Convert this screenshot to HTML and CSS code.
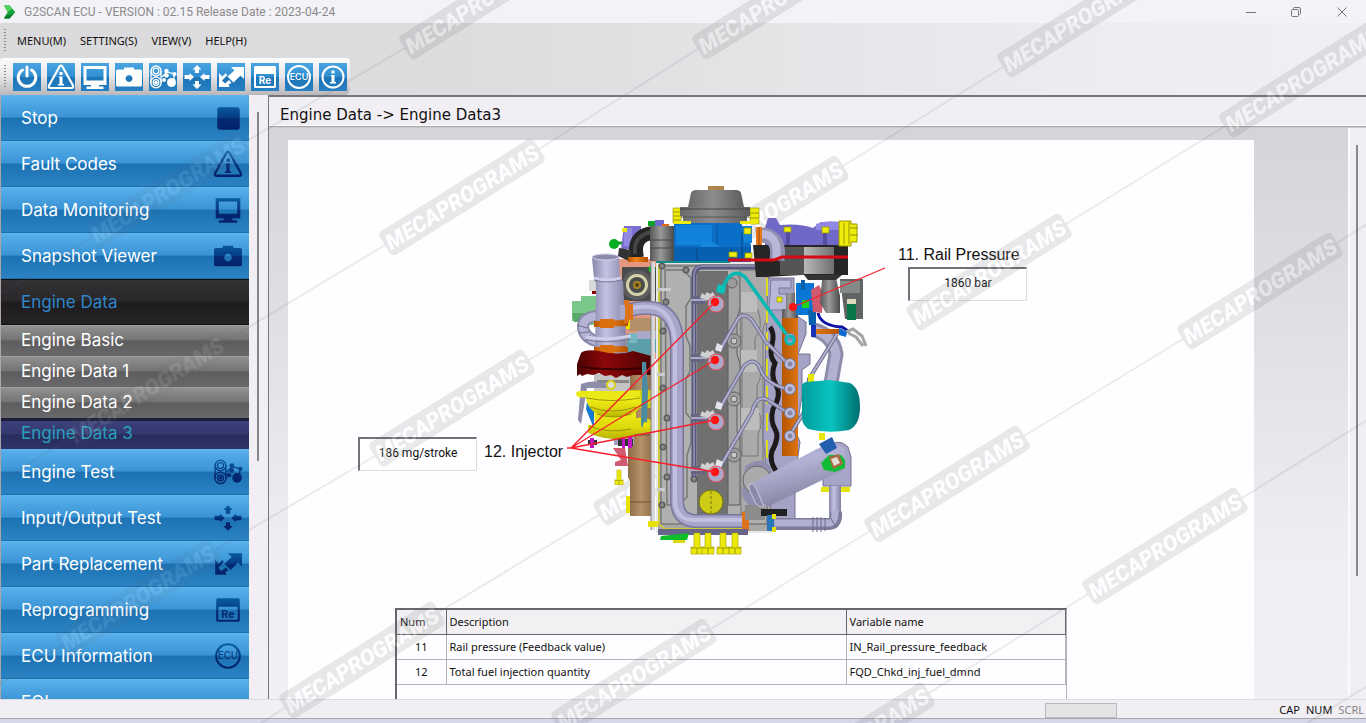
FILE: index.html
```html
<!DOCTYPE html>
<html lang="en">
<head>
<meta charset="utf-8">
<title>G2SCAN ECU</title>
<link rel="stylesheet" href="styles.css">
</head>
<body>
<svg class="defs" width="0" height="0" aria-hidden="true">
  <defs>
    <linearGradient id="navy" gradientUnits="userSpaceOnUse" x1="0" y1="0" x2="0" y2="28">
      <stop offset="0" stop-color="#0a64a6"/><stop offset=".5" stop-color="#063b84"/><stop offset=".52" stop-color="#042a72"/><stop offset="1" stop-color="#032069"/>
    </linearGradient>
    <symbol id="i-power" viewBox="0 0 28 28"><path fill="none" stroke-width="3" stroke-linecap="round" d="M14 4v9M9.500 7a8.800 8.800 0 1 0 9 0"/></symbol>
    <symbol id="i-stop" viewBox="0 0 28 28"><rect stroke="none" x="4" y="4" width="21" height="21" rx="2.500"/></symbol>
    <symbol id="i-warn" viewBox="0 0 28 28"><path fill="none" stroke-width="2.200" stroke-linejoin="round" d="M12.600 3.500Q14 1.500 15.400 3.500L26 22.500Q26.800 25 24.500 25H3.500Q1.200 25 2 22.500Z"/><path stroke="none" d="M12.500 9h3v3h-3zM12 13.500h3.500V21H17v1.500h-6V21h1.500v-6H12z"/></symbol>
    <symbol id="i-monitor" viewBox="0 0 28 28"><path stroke="none" fill-rule="evenodd" d="M2.500 3h23v19h-23zM5.500 6v11.500h17V6zM10 22h8v1.500h4.500V26h-17v-2.500H10z"/></symbol>
    <symbol id="i-camera" viewBox="0 0 28 28"><path stroke="none" fill-rule="evenodd" d="M1 8q0-1.500 1.500-1.500H9V4.500h10v2h6.500Q27 6.500 27 8v14q0 1.500-1.500 1.500h-23Q1 23.500 1 22zM14 12a3.500 3.500 0 1 0 .1 0z"/></symbol>
    <symbol id="i-test" viewBox="0 0 28 28"><g fill="none" stroke-width="1.300"><circle cx="7" cy="8" r="5"/><circle cx="7" cy="8" r="2.800"/><circle cx="7" cy="19.500" r="5.300"/><circle cx="7" cy="19.500" r="2.800"/><path d="M2 8v12M12 8v12M13 14l5-5 7 2v8l-4 2"/></g><g stroke="none"><circle cx="7" cy="19.500" r="1.700"/><circle cx="17.500" cy="8" r="2.200"/><circle cx="17.500" cy="12.500" r="2.200"/><circle cx="22.500" cy="19.500" r="4.500"/><circle cx="25.500" cy="11" r="2"/><circle cx="15" cy="17" r="2"/></g></symbol>
    <symbol id="i-arrows" viewBox="0 0 28 28"><path stroke="none" d="M14 2l4.500 4.500H16V10h-4V6.500H9.500zM14 26l-4.500-4.500H12V18h4v3.500h2.500zM11 14l-4.500 4V16H1.500v-4h5v-2zM17 14l4.500-4v2h5v4h-5v2z"/></symbol>
    <symbol id="i-replace" viewBox="0 0 28 28"><path stroke="none" d="M14 4h13v12l-3.500-3.500-7 7-6-6 7-6zM2 24V10l3.200 3.500L9 10l1 2.500-5 5 3 3L12 17l2.500 3-3 1.500 1 2.500z"/></symbol>
    <symbol id="i-re" viewBox="0 0 28 28"><path stroke="none" fill-rule="evenodd" d="M4.500 3h19Q25 3 25 4.500v19q0 1.500-1.500 1.500h-19Q3 25 3 23.500v-19Q3 3 4.500 3zM5 11v12h18V11z"/><text class="icon-re" x="14" y="21" text-anchor="middle">Re</text></symbol>
    <symbol id="i-ecu" viewBox="0 0 28 28"><circle cx="14" cy="14" r="11" fill="none" stroke-width="2"/><text class="icon-ecu" x="14" y="17" text-anchor="middle">ECU</text></symbol>
    <symbol id="i-info" viewBox="0 0 28 28"><circle cx="14" cy="14" r="10.500" fill="none" stroke-width="2"/><path stroke="none" d="M12.500 7.500h3v3h-3zM12 12h3.500v7H17v1.500h-6V19h1.500v-5.500H12z"/></symbol>
    <linearGradient id="pipeH" x1="0" x2="1"><stop offset="0" stop-color="#8886a8"/><stop offset=".4" stop-color="#c4c3e4"/><stop offset="1" stop-color="#8381a2"/></linearGradient>
    <linearGradient id="metal" x1="0" x2="1"><stop offset="0" stop-color="#575757"/><stop offset=".45" stop-color="#9a9a9a"/><stop offset="1" stop-color="#4a4a4a"/></linearGradient>
    <linearGradient id="pulley" x1="0" x2="1"><stop offset="0" stop-color="#6a6a6a"/><stop offset=".45" stop-color="#8c8c8c"/><stop offset="1" stop-color="#5c5c5c"/></linearGradient>
    <linearGradient id="side" x1="0" x2="1"><stop offset="0" stop-color="#b9b9b9"/><stop offset="1" stop-color="#6f6f6f"/></linearGradient>
    <linearGradient id="yel" x1="0" y1="0" x2="0" y2="1"><stop offset="0" stop-color="#f2f01c"/><stop offset=".6" stop-color="#dcd80a"/><stop offset="1" stop-color="#b5b105"/></linearGradient>
    <linearGradient id="red" x1="0" x2="1"><stop offset="0" stop-color="#4c0203"/><stop offset=".35" stop-color="#8c0709"/><stop offset="1" stop-color="#480203"/></linearGradient>
    <linearGradient id="teal" x1="0" x2="1"><stop offset="0" stop-color="#009c9a"/><stop offset=".5" stop-color="#09c4c0"/><stop offset="1" stop-color="#006e70"/></linearGradient>
    <linearGradient id="orange" x1="0" x2="1"><stop offset="0" stop-color="#b65600"/><stop offset=".4" stop-color="#f0831c"/><stop offset="1" stop-color="#b05000"/></linearGradient>
    <linearGradient id="tan" x1="0" x2="1"><stop offset="0" stop-color="#8b6b47"/><stop offset=".5" stop-color="#b79268"/><stop offset="1" stop-color="#896945"/></linearGradient>
    <linearGradient id="big" x1="0" y1="0" x2=".4" y2="1"><stop offset="0" stop-color="#9b99ba"/><stop offset=".4" stop-color="#b4b3d5"/><stop offset="1" stop-color="#83819f"/></linearGradient>
    <g id="bolt"><path fill="#ece90c" stroke="#a39f00" stroke-width=".6" d="M-3 0H3V14H6V21H-6V14H-3z"/><path stroke="#a39f00" d="M-6 15H6M0 15v6"/></g>
    <g id="inj"><path d="M-24-6v8h14v-8z" fill="#66657f"/><path d="M-24-2H-8" stroke="#aaa9c9" stroke-width="2"/><path d="M-15-4l2-5 3 2 2-3 3 2 3-2 2 4-3 5z" fill="#d0d0d0"/><circle r="8" cx="1" cy="2" fill="#aaa9c9" stroke="#e65b66"/><circle r="4.200" fill="#f11"/></g>
    <g id="nut"><circle r="3.500" fill="#5c5c5c"/><circle r="2" fill="#888"/></g>
    <g id="joint"><circle r="6" fill="#77768f"/><circle r="5" fill="#bdbcdc"/><circle r="2.500" fill="#8887a5"/></g>
    <mask id="cut" maskUnits="userSpaceOnUse" x="-95" y="-18" width="190" height="36"><rect x="-95" y="-18" width="190" height="36" fill="#fff"/><text class="mark-cut" y="8" text-anchor="middle">MECAPROGRAMS</text></mask>
    <g id="tag"><rect x="-91" y="-14" width="182" height="28" rx="5" fill="#60606c" fill-opacity=".14" mask="url(#cut)"/><text class="mark-text" y="8" text-anchor="middle">MECAPROGRAMS</text></g>
  </defs>
</svg>

<div class="app">
  <header class="titlebar">
    <svg class="logo" viewBox="0 0 14 16" aria-hidden="true"><path fill="#12a63b" d="M0 1h6l6 7-6 7H0l4-7z"/><path fill="#4fd05f" d="M6 1l3 3.500-5 3.500-4-7z"/><path fill="#067a2a" d="M12 8l-6 7H0l2-3.500 6-.5z"/></svg>
    <h1>G2SCAN ECU - VERSION : 02.15 Release Date : 2023-04-24</h1>
    <div class="window-buttons">
      <button aria-label="Minimize"><svg viewBox="0 0 12 12"><path d="M1 6.500h10"/></svg></button>
      <button aria-label="Restore"><svg viewBox="0 0 12 12"><path d="M3.500 3V2.500q0-1 1-1H9q1.500 0 1.500 1.500v4.500q0 1-1 1M2.500 3.500h5q1 0 1 1v5q0 1-1 1h-5q-1 0-1-1v-5q0-1 1-1z"/></svg></button>
      <button aria-label="Close"><svg viewBox="0 0 12 12"><path d="M1.500 1.500l9 9M10.500 1.500l-9 9"/></svg></button>
    </div>
  </header>

  <div class="chrome">
    <nav class="menubar">
      <span class="grip"></span>
      <button>MENU(M)</button><button>SETTING(S)</button><button>VIEW(V)</button><button>HELP(H)</button>
    </nav>
    <div class="toolbar">
      <span class="grip"></span>
      <button aria-label="Exit"><svg><use href="#i-power"/></svg></button>
      <button aria-label="Fault Codes"><svg><use href="#i-warn"/></svg></button>
      <button aria-label="Data Monitoring"><svg><use href="#i-monitor"/></svg></button>
      <button aria-label="Snapshot"><svg><use href="#i-camera"/></svg></button>
      <button aria-label="Engine Test"><svg><use href="#i-test"/></svg></button>
      <button aria-label="Input/Output Test"><svg><use href="#i-arrows"/></svg></button>
      <button aria-label="Part Replacement"><svg><use href="#i-replace"/></svg></button>
      <button aria-label="Reprogramming"><svg><use href="#i-re"/></svg></button>
      <button aria-label="ECU Information"><svg><use href="#i-ecu"/></svg></button>
      <button aria-label="About"><svg><use href="#i-info"/></svg></button>
    </div>
  </div>

  <div class="body">
    <aside class="sidebar">
      <nav class="nav">
        <button class="item">Stop<svg><use href="#i-stop"/></svg></button>
        <button class="item">Fault Codes<svg><use href="#i-warn"/></svg></button>
        <button class="item">Data Monitoring<svg><use href="#i-monitor"/></svg></button>
        <button class="item">Snapshot Viewer<svg><use href="#i-camera"/></svg></button>
        <button class="item open">Engine Data</button>
        <button class="sub">Engine Basic</button>
        <button class="sub">Engine Data 1</button>
        <button class="sub">Engine Data 2</button>
        <button class="sub current">Engine Data 3</button>
        <button class="item">Engine Test<svg><use href="#i-test"/></svg></button>
        <button class="item">Input/Output Test<svg><use href="#i-arrows"/></svg></button>
        <button class="item">Part Replacement<svg><use href="#i-replace"/></svg></button>
        <button class="item">Reprogramming<svg><use href="#i-re"/></svg></button>
        <button class="item">ECU Information<svg><use href="#i-ecu"/></svg></button>
        <button class="item">EOL</button>
      </nav>
      <div class="track"><div class="thumb"></div></div>
    </aside>

    <main class="content">
      <h2 class="crumb">Engine Data -&gt; Engine Data3</h2>
      <div class="view">
        <div class="desk">
          <div class="paper">
            <div class="figure">
              <svg class="engine" viewBox="288 140 966 468" role="img" aria-label="Engine, top view">
                <!-- left housings and turbo -->
                <path fill="#7cc88a" d="M572 301h9v-5h18v29h-12v-4h-15z"/><path fill="#5aa96b" d="M572 313h27v9h-25z"/>
                <path fill="none" stroke="#8a89a9" stroke-width="12" d="M600 316q-16 0-17 10 0 12 16 16"/><path fill="none" stroke="#b5b4d5" stroke-width="8" d="M600 316q-16 0-17 10 0 12 16 16"/><path d="M577 325l10 3M579 333l10-1M585 341l6-6" stroke="#6f6e8a"/>
                <path fill="#d9d9d9" d="M589 280h8v11h-8z"/><path fill="#800" d="M592 291h6v3h-6z"/>
                <path fill="#e5987f" d="M617 259h44v100h-44z"/>
                <path fill="url(#tan)" d="M630 387h24v129h-24v-35l-2-4v-80z"/><path d="M630 435h22M630 502h22" stroke="#6e5234"/>
                <path fill="#4a4a4a" d="M622 267h34v34h-34z"/><circle cx="637" cy="285" r="15" fill="#5d5d5d"/><circle cx="637" cy="285" r="11" fill="#d5d3aa"/><circle cx="637" cy="285" r="8" fill="#4c4c4c"/><circle cx="637" cy="285" r="4" fill="#a68423"/><circle cx="637" cy="285" r="2" fill="#53421a"/>
                <circle cx="652" cy="269" r="3.500" fill="#0bbf1d"/>
                <path fill="#b49068" d="M629 318h27v13h-27z"/><path fill="#e8e406" d="M626 319h4v10h-4z"/>
                <path fill="#5b9fab" d="M627 334h29v18q-4 6-14 6t-15-6z"/><path fill="#a9a8c9" d="M637 331h20v8h-20z"/><path fill="#77b7c2" d="M629 333h8v10h-8z"/>
                <path fill="url(#pipeH)" d="M592 258l27-3 1 22 3 5 4 72q-16 5-32 0l1-70-2-6z"/><ellipse cx="605.500" cy="257" rx="13.500" ry="3" fill="#8c8ba9" stroke="#d1d0ed"/>
                <path d="M594 278q14 4 27 0M586 337q20 4 45-1" fill="none" stroke="#cfceea" stroke-width="3"/><path d="M594 280q14 4 27 0M586 340q20 4 45-1" fill="none" stroke="#7a7898"/>
                <path fill="url(#orange)" d="M594 321l31-1 3 2v4l-34 1zM594 347l31-1 3 2v4l-34 1z"/><path d="M600 319h14v9h-14zM600 345h14v9h-14z" fill="#d96f0e"/>
                <path fill="url(#tan)" d="M628 365h26v22h-26z"/>
                <path fill="#c4c4c4" d="M594 374h36v19h-36z"/><path fill="#888" d="M597 380h32v3h-32z"/>
                <path fill="url(#red)" d="M581 353q4-4 18-2 20 5 34 0l22 6v18h-22l-6 2-5-2-6 3-5-3-6 1-6-3-6 2-6-1-5 2-2-2-3 2v-12z"/><path d="M578 366q30 6 76 1" stroke="#390102" stroke-width="2" fill="none"/>
                <path fill="#1679d0" d="M587 402l7 3v24l-8-20z"/><path fill="#8d8ca9" d="M581 384q12-5 26 0v4h-20l-6 36-3-4z"/>
                <path fill="#a09fbf" d="M614 430h20v15h-20z"/>
                <path fill="#d2ce0c" d="M630 390h22v18h-22z"/>
                <path fill="url(#yel)" d="M594 410h42v8q12-2 16 4v10l-17 2-4 4q-20 4-43-5v-8h7z"/>
                <path fill="url(#yel)" d="M586 397h54q4 8-4 15-20 10-42 0-8-7-8-15z"/>
                <path fill="#ebe817" d="M576 393q2-3 10-2h54v5q-26 5-54 1-10 2-10-4z"/>
                <path d="M586 398q26 5 54 0M590 407q22 8 46 0M597 414q16 6 34 0M589 426q20 8 42 3" stroke="#99940a" fill="none"/>
                <circle cx="611" cy="385" r="5" fill="#d7d419"/><circle cx="611" cy="385" r="3" fill="#ddd"/>
                <path fill="#4b8ca0" d="M642 362h4l2 28-1 35q-5 4-6 0l1-35z"/><circle cx="646" cy="425" r="3" fill="#e8e406"/>
                <path fill="#333" d="M588 440h9v5h-9zM618 439h15v7h-15z"/><path fill="#c018c0" d="M590 438h4v10h-4zM622 437h3v13h-3zM628 437h4v11h-4z"/>
                <path fill="#d05a70" d="M613 448h12l3 18h-13v-4l6-2z"/><use href="#bolt" transform="translate(619 470) scale(.7)"/>
                <path fill="#e8e406" d="M626 496h4v17h-4z"/>
                <!-- cylinder block -->
                <path fill="#aaa8a5" stroke="#e8e8e8" stroke-width="2" d="M657 263h114v269h-114z"/>
                <path fill="#b0b0b0" stroke="#606060" d="M661 266h106v258h-106z"/>
                <path d="M659 264v260l6 5h80" fill="none" stroke="#d5d21a" stroke-width="1.500"/><path d="M653 262v268" stroke="#d8d8dc" stroke-width="4"/><path d="M651 262v268" stroke="#858585"/>
                <path fill="none" stroke="#777" stroke-width="1.500" d="M665 270h18l8 8v20l-5 8v30l4 10v25l-4 8v34l5 6v24l-4 12v42l-8 8h-12z"/>
                <path fill="#707070" d="M697 271h31v248h-31z"/>
                <path fill="#a4a4a4" stroke="#5d5d5d" d="M728 278q6-9 12 0v30l-3 10v36l3 10v28l-3 8v32l3 8v65h-12z"/>
                <path fill="#aaa" stroke="#777" d="M740 270h28v46l-5 12v144l-4 28-18 14zM742 310h16q6 18-3 28v24q10 10 2 24v24q8 10 1 24v22h-16z"/>
                <path fill="#bdbdbd" d="M741 292h16v20h-16zM741 350h16v22h-16zM741 408h18v22h-18z"/>
                <g fill="#9c9c9c" stroke="#626262"><circle cx="734" cy="341" r="7"/><circle cx="734" cy="399" r="7"/><circle cx="734" cy="455" r="7"/><circle cx="732" cy="283" r="5"/></g><g fill="#c7c7c7" stroke="#666"><circle cx="734" cy="341" r="3"/><circle cx="734" cy="399" r="3"/><circle cx="734" cy="455" r="3"/></g>
                <use href="#nut" x="662" y="266"/><use href="#nut" x="686" y="270"/><use href="#nut" x="666" y="302"/><use href="#nut" x="663" y="331"/><use href="#nut" x="663" y="388"/><use href="#nut" x="667" y="418"/><use href="#nut" x="663" y="447"/><use href="#nut" x="667" y="477"/><use href="#nut" x="662" y="505"/><use href="#nut" x="694" y="479"/>
                <path fill="#ccc" d="M657 288h14v3h-14zM657 373h8v3h-8zM657 488h8v3h-8z"/>
                <path fill="none" stroke="#56557a" stroke-width="5" stroke-linejoin="round" d="M770 267h-68q-8 0-8 10v200"/><path fill="none" stroke="#8785a8" stroke-width="2" d="M770 266h-68q-8 0-8 10v200"/>
                <!-- fuel rail side -->
                <path fill="#a4a3c5" stroke="#74738e" d="M768 278h26v36l12 8v12l-8 20h12v10l-8 6v26l-6 36 4 10-5 36v48h-22l-4-30-6-60z"/>
                <path fill="#b8b7d8" stroke="#7a7998" d="M771 280h20v8h-12v6h10v16h-20z"/><path d="M767 278v204" stroke="#dedb20" stroke-width="2" stroke-dasharray="18 9"/>
                <path fill="none" stroke="#1e1a1a" stroke-width="5" d="M770 327q5 6 2 18t3 18q-5 12 1 22t-3 24q-3 12 2 20t-3 22q-3 10 4 20"/>
                <path fill="url(#metal)" d="M786 293h9v16h3v12h-16v-12h4z"/>
                <path fill="#0876d5" d="M796 283h18v32h-18z"/><path fill="#0761ad" d="M801 280h4v10h-4zM808 310h8v15h-7z"/><path fill="#d05a6b" d="M811 290l8-5 4 8-1 20-9-1z"/><path fill="#20d31d" d="M802 300h7v8h-7z"/>
                <path fill="url(#metal)" d="M822 280l14-2 4 18v17h-14l-6-10z"/><path fill="#606462" d="M840 279h23v40h-18z"/><path fill="#848b87" d="M840 281h20v12h-20z"/><path fill="#dcd9bd" d="M847 299h9v6h-9z"/><path fill="#08784a" d="M847 304h9v16h-9z"/>
                <path fill="#262626" d="M753 245h95v30h-46l-36 2h-10z"/><path fill="#555" d="M780 247h24v28h-24z"/><path fill="url(#side)" d="M804 247h30v27h-30z"/><path fill="#333" d="M804 275h38l-6 5h-28z"/>
                <path fill="none" stroke="#8d8cab" stroke-width="15" d="M814 330q19 5 22 24l-6 35"/><path fill="none" stroke="#b2b1d2" stroke-width="9" d="M814 330q19 5 22 24l-6 35"/>
                <path fill="url(#orange)" d="M815 329h27v5h-27zM782 318h16v138h-16z"/><path fill="#1734b7" d="M811 325h5v12h-5z"/>
                <path d="M818 313q3 13 24 14l6 4" fill="none" stroke="#0d13a4" stroke-width="3"/><path d="M846 332l7-3 9 7 4 10M848 333l8 4 7 9" stroke="#a4a4a4" stroke-width="3" fill="none"/><path fill="#0c6bd1" d="M839 328l8 4-1 5-7-2z"/>
                <!-- upper housings -->
                <path fill="#796fd0" d="M624 226h17v23h-20z"/><path fill="#9289e0" d="M624 228h8v18h-8z"/><path fill="#eae70a" d="M622 228h5v4h-5z"/>
                <path fill="none" stroke="#252525" stroke-width="14" d="M637 258q-5-23 16-25"/><path fill="none" stroke="#454545" stroke-width="4" d="M635 254q-2-18 16-22"/><path fill="#333" d="M619 248l12 2v12l-13-6z"/>
                <path fill="url(#orange)" d="M628 257h20v5h-20z"/><path stroke="#149922" stroke-width="3" d="M614 243h8"/><circle cx="614" cy="244" r="5" fill="#08ae20"/>
                <path fill="#0aa329" d="M648 221h8v5h-8z"/><path fill="#7169cf" d="M655 220h9v6h-9z"/><path fill="#e4660b" d="M662 224h7v4h-7z"/>
                <path fill="url(#metal)" d="M650 226h24v35h-24z"/><path d="M650 240h24M650 248h24" stroke="#444"/>
                <path fill="#7068c7" d="M765 228l3-10h8l4 7q20-2 33 3l8-6h20v23h-76z"/><path fill="#9188e4" d="M816 224q10-4 24-2v8h-24z"/><path d="M788 231v14M825 231v14" stroke="#544c9d" stroke-width="4"/>
                <path fill="#eeec0d" stroke="#9a9602" d="M839 221h12v3h6v18h-6v4h-12z"/><path d="M844 223v21M849 222v22M850 228h8M850 235h8" stroke="#989500"/>
                <path fill="none" stroke="#9190b0" stroke-width="15" d="M756 235q25-2 21 25"/><path fill="none" stroke="#b9b8d8" stroke-width="8" d="M758 234q22-2 18 26"/>
                <path fill="#e67817" d="M756 227h6v18h-6z"/><path d="M759 227v18" stroke="#9d4904"/>
                <path fill="#0a6fc8" d="M674 223h67l10 22v17h-77z"/><path fill="#1282da" d="M676 225h36v20h-36zM742 226h10v17h-8z"/><path fill="#0960b0" d="M674 247h77v14h-77zM716 225h2v25h-2z"/><path fill="#1689dc" d="M700 247q8-10 20 0h-20z"/><path d="M697 249v12M731 249v12M742 232v28" stroke="#0b427b"/>
                <path d="M656 262h74" stroke="#14888b" stroke-width="2"/>
                <path fill="#eceb0b" stroke="#979502" stroke-width=".7" d="M744 228h7v6h-7zM784 227h7v5h-7zM822 227h7v6h-7zM729 252h8v5h-8zM745 253h7v5h-7zM777 297h5v5h-5z"/>
                <path d="M728 260h46l8-3h66" stroke="#d50a13" stroke-width="3" fill="none"/>
                <path fill="#eceb0b" stroke="#a09c00" stroke-width=".7" d="M673 208h8v15h-8zM750 208h9v16h-9z"/><path stroke="#9d9900" d="M673 212h8M673 216h8M673 220h8M750 213h9M750 218h9"/>
                <path fill="url(#pulley)" d="M680 207h70v9h-3v7h-64v-7h-3z"/><path d="M680 209h70" stroke="#444"/><path d="M681 217h68" stroke="#555"/><path fill="#eceb0b" d="M674 221h17v3h-17zM740 221h17v3h-17z"/>
                <path fill="url(#pulley)" d="M688 207l3-14q1-3 5-3h40q4 0 5 3l3 14z"/><path fill="#ad864f" d="M708 186h16v4h-16z"/>
                <!-- water pipe -->
                <path fill="none" stroke="#77759a" stroke-width="14" stroke-linejoin="round" d="M628 311q12-5 29-2 19 6 20 33v158q0 20 18 21h50"/><path fill="none" stroke="#a7a6ca" stroke-width="11" d="M628 311q12-5 29-2 19 6 20 33v158q0 20 18 21h50"/><path fill="none" stroke="#c0bfe0" stroke-width="4" d="M628 309q14-4 28-1 17 6 19 34v158q0 20 20 20h50"/>
                <path fill="#dd731a" d="M624 300h5v4h4v16h-4v3h-5zM742 512h7v19h-7z"/><path fill="#aaa9ca" d="M620 305h5v14h-5z"/>
                <path fill="#67658a" d="M658 529h90v6h-90z"/><path fill="#e5e20d" d="M648 521h10v6h-10z"/><path fill="#0fbd2c" d="M661 536l28-3-2 7h-27z"/><path fill="#ddda10" d="M673 540h12v3h-12z"/>
                <circle cx="711" cy="502" r="12" fill="#cfcc17" stroke="#77740d"/><path d="M711 491v22" stroke="#77740d" stroke-dasharray="3 2"/>
                <use href="#bolt" x="697" y="533"/><use href="#bolt" x="708" y="533"/><use href="#bolt" x="723" y="533"/><use href="#bolt" x="735" y="533"/>
                <!-- injection lines -->
                <g fill="none" stroke="#706f8d" stroke-width="4"><path d="M720 350l16-28q6-12 16-2l14 22 22 22M720 408l24-42q10-10 16 2 5 16 28 21M720 467l32-55q4-16 14-13l22 14M790 435l17-28 2-28 28-45"/></g><g fill="none" stroke="#b0afcf" stroke-width="2"><path d="M720 350l16-28q6-12 16-2l14 22 22 22M720 408l24-42q10-10 16 2 5 16 28 21M720 467l32-55q4-16 14-13l22 14M790 435l17-28 2-28 28-45"/></g>
                <path fill="none" stroke="#06b8b2" stroke-width="3.500" d="M721 290l7-12q8-9 17-1l44 61"/><path fill="#0bc2b9" d="M718 284l8 3-2 7-8-2z"/>
                <use href="#joint" x="790" y="339"/><use href="#joint" x="790" y="364"/><use href="#joint" x="790" y="389"/><use href="#joint" x="790" y="413"/><use href="#joint" x="790" y="436"/><circle cx="790" cy="340" r="4" fill="none" stroke="#07b9b3" stroke-width="3"/>
                <path fill="#e4e4ec" d="M717 343l6 3-2 6-6-2zM717 401l6 3-2 6-6-2zM717 459l6 3-2 6-6-2z"/>
                <!-- filter and outlet pipe -->
                <path fill="#e9e60d" d="M808 374h6v9h-6zM819 433h6v7h-6z"/><path fill="url(#teal)" d="M802 386q0-3 4-4l24-2 20 3q10 5 10 24 0 18-11 23-20 4-41-1-6-5-6-11z"/>
                <path fill="#8f8eae" d="M745 466q22-13 27 6v25q-20 22-30-2z"/><circle cx="757" cy="480" r="14" fill="#aaa" stroke="#666"/><path fill="#8c8c8c" d="M745 505h20v15h-20z"/><path fill="#222" d="M761 509h26v7h-26z"/>
                <path fill="#a6a5c7" stroke="#74738e" d="M828 446q12-8 20 1l3 10v29h-28v-28z"/><path fill="#e5e20c" d="M821 487h8v5h-8zM841 487h9v5h-9z"/><path fill="url(#pipeH)" d="M829 486h12v36h-12z"/>
                <path fill="none" stroke="#7e7c9d" stroke-width="12" d="M775 524h54q8 0 7-12"/><path fill="none" stroke="#b1b0d1" stroke-width="7" d="M775 523h54q6 0 6-12"/><path d="M813 517v15M817 517v15M821 517v15M825 518v13M830 517l6 10" stroke="#6d6b8b"/>
                <path fill="#2876b6" d="M767 515h7v16h-7z"/><path fill="#e5e20d" d="M772 514h4v5h-4zM772 527h4v5h-4z"/>
                <path fill="url(#big)" d="M750 484l67-35q15-8 25-2 7 6 3 22l-78 38z"/><path fill="#8a89a9" stroke="#cccbe7" d="M749 485q4-4 8 5l7 17q-8 1-11-10-5-8-4-12z"/>
                <path fill="#12bb35" d="M821 463l8-8h12l4 5v8l-10 4-11-2z"/><path fill="#235fae" d="M819 444l13-7 5 11-11 6z"/><path fill="#aa6840" d="M829 457l10-3 4 10-10 5z"/><path fill="#e2dfd5" d="M831 459l6-2 3 6-6 3z"/>
                <!-- callouts -->
                <use href="#inj" x="715" y="302"/><use href="#inj" x="715" y="360"/><use href="#inj" x="715" y="420"/><use href="#inj" x="715" y="472"/>
                <circle cx="793" cy="307" r="4" fill="#f11"/>
                <path d="M567 448h4L715 302M571 448l144-88M571 448l144-28M571 448l144 24M793 307l92-39" stroke="#f5202c" stroke-width="1.300" fill="none"/>
              </svg>
              <label class="callout rail-label" for="rail">11. Rail Pressure</label>
              <input class="value rail-value" id="rail" value="1860 bar" readonly>
              <label class="callout injector-label" for="injector">12. Injector</label>
              <input class="value injector-value" id="injector" value="186 mg/stroke" readonly>
            </div>
            <div class="table-box">
              <table>
                <colgroup><col class="col-num"><col class="col-desc"><col></colgroup>
                <thead><tr><th>Num</th><th>Description</th><th>Variable name</th></tr></thead>
                <tbody>
                  <tr><td>11</td><td>Rail pressure (Feedback value)</td><td>IN_Rail_pressure_feedback</td></tr>
                  <tr><td>12</td><td>Total fuel injection quantity</td><td>FQD_Chkd_inj_fuel_dmnd</td></tr>
                </tbody>
              </table>
            </div>
          </div>
        </div>
        <div class="track view-track"><div class="thumb"></div></div>
      </div>
    </main>
  </div>

  <footer class="status">
    <span class="pane"></span>
    <span>CAP</span><span>NUM</span><span class="off">SCRL</span>
  </footer>
</div>

<svg class="watermark" aria-hidden="true">
  <g stroke="#60606c" stroke-opacity=".12" stroke-width="2">
    <path d="M-85 347L91 238M245 142L405 48M-10 488L70 438M224 342L385 245M539 149L698 49M-20 696L61 646M215 550L375 456M529 360L689 262M843 166L1003 67M120 811L285 708M439 612L599 515M1066 224L1225 126M530 741L557 725M711 629L870 531M1024 436L1183 339M1337 243L1380 216M929 693L1088 594M1242 498L1380 412M1200 790L1380 678"/>
  </g>
  <g class="faint">
    <use href="#tag" transform="translate(168 190) rotate(-32)"/>
    <use href="#tag" transform="translate(147 390) rotate(-32)"/>
    <use href="#tag" transform="translate(138 598) rotate(-32)"/>
  </g>
  <use href="#tag" transform="translate(482 1) rotate(-32)"/>
  <use href="#tag" transform="translate(462 197) rotate(-32)"/>
  <use href="#tag" transform="translate(775 1) rotate(-32)"/>
  <use href="#tag" transform="translate(452 408) rotate(-32)"/>
  <use href="#tag" transform="translate(766 214) rotate(-32)"/>
  <use href="#tag" transform="translate(1080 19) rotate(-32)"/>
  <use href="#tag" transform="translate(362 660) rotate(-32)"/>
  <use href="#tag" transform="translate(676 467) rotate(-32)"/>
  <use href="#tag" transform="translate(989 272) rotate(-32)"/>
  <use href="#tag" transform="translate(1302 79) rotate(-32)"/>
  <use href="#tag" transform="translate(634 677) rotate(-32)"/>
  <use href="#tag" transform="translate(947 484) rotate(-32)"/>
  <use href="#tag" transform="translate(1260 291) rotate(-32)"/>
  <use href="#tag" transform="translate(852 741) rotate(-32)"/>
  <use href="#tag" transform="translate(1165 546) rotate(-32)"/>
</svg>
</body>
</html>
```
FILE: styles.css
```css
* { box-sizing: border-box; }
body {
  margin: 0;
  position: relative;
  height: 100vh;
  overflow: hidden;
  background: #f1eff3;
  color: #111;
  font: 11px/16px "Noto Sans", "Open Sans", sans-serif;
}
button { border: 0; padding: 0; background: none; font: inherit; color: inherit; }
.defs { position: absolute; }
.app { display: flex; flex-direction: column; height: 100vh; }

.titlebar { display: flex; align-items: center; height: 23px; background: #f3f2f6; padding-left: 4px; }
.logo { width: 13px; height: 16px; }
.titlebar h1 { margin: 0 0 0 7px; font: 12px/16px Roboto, sans-serif; color: #8b8a8d; flex: 1; }
.window-buttons { display: flex; }
.window-buttons button { width: 45px; height: 20px; display: grid; place-items: center; }
.window-buttons button:last-child { width: 48px; }
.window-buttons svg { width: 12px; height: 12px; fill: none; stroke: #77767b; }

.chrome { background: linear-gradient(90deg, #dad9db, #dddcde 35%, #eeecf0 80%, #f1eff3); }
.menubar { display: flex; align-items: center; gap: 14px; height: 35px; padding-left: 4px; }
.grip { width: 2px; height: 24px; background: repeating-linear-gradient(#8b8a8d 0 1px, transparent 1px 3px); }
.menubar .grip { margin-right: -3px; }
.toolbar {
  display: flex; align-items: center; gap: 6px; width: 350px; height: 37px; padding-left: 4px;
  border-radius: 3px 4px 5px 0;
  background: linear-gradient(#fdfdfe, #e7e6e8 50%, #b9b7ba);
}
.toolbar .grip { margin-right: 1px; }
.toolbar button { width: 28px; height: 28px; background: linear-gradient(#4aa5e2, #2f8dcf 50%, #1b74b6 52%, #2680c3); }
.toolbar svg { display: block; width: 28px; height: 28px; fill: #fff; stroke: #fff; }
.icon-re { font: 700 10px Inter, sans-serif; stroke: none; }
.icon-ecu { font: 500 9px Inter, sans-serif; stroke: none; }

.body { display: flex; flex: 1; min-height: 0; }
.sidebar { display: flex; flex: none; width: 268px; border-left: 1px solid #aaa6a8; }
.nav { width: 248px; overflow: hidden; display: flex; flex-direction: column; }
.item, .sub { flex: none; display: flex; align-items: center; padding: 0 6px 0 20px; color: #fff; font: 17px/20px Inter, sans-serif; text-align: left; }
.item {
  height: 46px; justify-content: space-between;
  border-top: 1px solid #62b4ec; border-bottom: 1px solid #1b6dab;
  background: linear-gradient(#58b0ec, #3a93d4 48%, #1c72b3 50%, #2b83c4);
}
.item svg { width: 30px; height: 30px; fill: url(#navy); stroke: url(#navy); }
.open { color: #2e86c9; border-color: #111; background: linear-gradient(#333134, #29272a 48%, #1d1b1e 50%, #252326); }
.sub { height: 31px; padding-bottom: 2px; border-top: 1px solid #a19fa1; background: linear-gradient(#929192, #757475 45%, #5d5c5e 50%, #69686a); }
.current { padding-bottom: 4px; color: #2aa0bd; border-top: 3px solid #1b1d38; background: linear-gradient(#3b407b, #343970 45%, #272c5c 50%, #2f3468); }
.track { flex: 1; padding: 17px 0 0 8px; }
.thumb { width: 2px; height: 349px; background: #87868a; }

.content { flex: 1; min-width: 0; display: flex; flex-direction: column; border-left: 1px solid #77767a; border-top: 2px solid #77767a; }
.crumb { margin: 0; height: 30px; padding: 4px 0 0 11px; font: 15px/28px "DejaVu Sans", sans-serif; border-bottom: 1px solid #a9a8ac; box-shadow: inset 0 -1px #fff; }
.view { flex: 1; min-height: 0; display: flex; border-top: 1px solid #c9c8cc; }
.desk { flex: 1; overflow: hidden; padding: 12px 94px 0 19px; border-right: 2px solid #fbfafc; background: linear-gradient(#d5d4da, #dddce1 25%, #efeef3 75%, #f1f0f4); }
.paper { min-height: 100%; background: #fefdff; }
.view-track { flex: none; width: 16px; padding: 17px 0 0 6px; }
.view-track .thumb { height: 431px; }

.figure { position: relative; width: 966px; height: 468px; }
.engine { display: block; position: relative; z-index: 2; width: 966px; height: 468px; pointer-events: none; }
.callout { position: absolute; font: 16px/20px "Liberation Sans", sans-serif; }
.value {
  position: absolute; width: 119px; height: 34px; padding: 0 0 3px; text-align: center;
  font: 12px/16px Roboto, sans-serif; color: #111; background: #fff;
  border: solid; border-width: 2px 1px 1px 2px; border-color: #737277 #dedde1 #dedde1 #737277;
}
.rail-label { left: 610px; top: 105px; }
.rail-value { left: 620px; top: 127px; }
.injector-label { left: 196px; top: 302px; }
.injector-value { left: 70px; top: 297px; }

.table-box { width: 672px; min-height: 100px; margin-left: 107px; border: solid #68676b; border-width: 2px 1px 0 2px; border-right-color: #b4b3b7; }
table { width: 100%; border-collapse: collapse; table-layout: fixed; }
.col-num { width: 49px; }
.col-desc { width: 400px; }
th, td { height: 25px; padding: 0 3px; font-weight: 400; text-align: left; border: solid #b4b3b7; border-width: 0 1px 1px 0; }
th { height: 24px; background: #f2f0f3; border-color: #68676b; }
td:first-child { text-align: center; }

.status { display: flex; align-items: center; justify-content: flex-end; gap: 6px; height: 24px; padding: 0 2px 3px 0; border-top: 1px solid #dcdbdf; background: linear-gradient(#f1eff3 18px, #aaa9af 18px 19px, #d5d8e8 19px); }
.pane { width: 72px; height: 15px; margin-right: 156px; border: 1px solid #bbbabd; background: #e5e3e6; }
.off { color: #85848a; }

.watermark { position: absolute; inset: 0; z-index: 1; width: 100%; height: 100%; pointer-events: none; }
.mark-text, .mark-cut { font: italic 900 22px Roboto, sans-serif; fill: #fff; fill-opacity: .2; }
.mark-cut { fill: #000; fill-opacity: 1; }
.faint { opacity: .5; }
```
